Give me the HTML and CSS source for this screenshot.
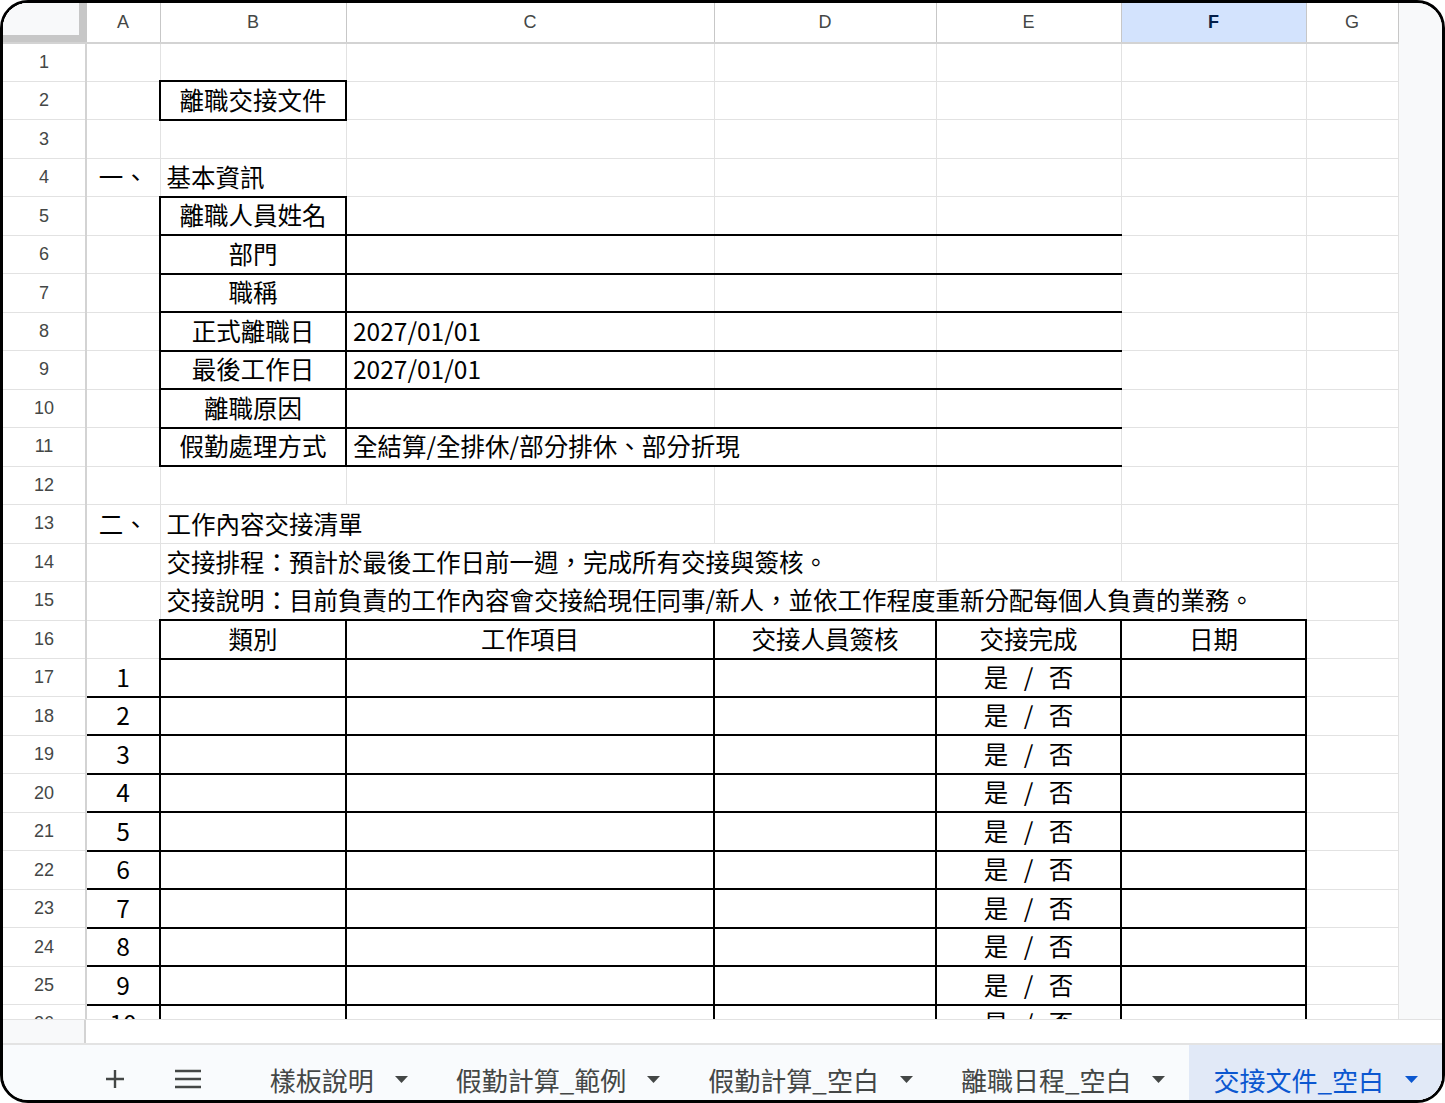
FILE: index.html
```html
<!DOCTYPE html>
<html lang="zh-Hant">
<head>
    <meta charset="UTF-8">
    <meta name="viewport" content="width=device-width, initial-scale=1.0">
    <title>離職交接文件</title>
    <link rel="stylesheet" href="styles.css">
</head>
<body>
    <div class="frame">
        <div class="sheet">
            <table class="grid">
                <colgroup>
                    <col class="c-rh">
                    <col class="c-a">
                    <col class="c-b">
                    <col class="c-c">
                    <col class="c-d">
                    <col class="c-e">
                    <col class="c-f">
                    <col class="c-g">
                </colgroup>
                <tr class="head">
                    <th class="corner"></th>
                    <th>A</th><th>B</th><th>C</th><th>D</th><th>E</th><th class="sel">F</th><th>G</th>
                </tr>
                <tr><th class="rh">1</th><td></td><td></td><td></td><td></td><td></td><td></td><td></td></tr>
                <tr><th class="rh">2</th><td></td><td class="box center">離職交接文件</td><td></td><td></td><td></td><td></td><td></td></tr>
                <tr><th class="rh">3</th><td></td><td></td><td></td><td></td><td></td><td></td><td></td></tr>
                <tr><th class="rh">4</th><td class="center">一、</td><td>基本資訊</td><td></td><td></td><td></td><td></td><td></td></tr>
                <tr><th class="rh">5</th><td></td><td class="box center">離職人員姓名</td><td class="bb"></td><td class="bb"></td><td class="bb"></td><td></td><td></td></tr>
                <tr><th class="rh">6</th><td></td><td class="box center">部門</td><td class="bb"></td><td class="bb"></td><td class="bb"></td><td></td><td></td></tr>
                <tr><th class="rh">7</th><td></td><td class="box center">職稱</td><td class="bb"></td><td class="bb"></td><td class="bb"></td><td></td><td></td></tr>
                <tr><th class="rh">8</th><td></td><td class="box center">正式離職日</td><td class="bb">2027/01/01</td><td class="bb"></td><td class="bb"></td><td></td><td></td></tr>
                <tr><th class="rh">9</th><td></td><td class="box center">最後工作日</td><td class="bb">2027/01/01</td><td class="bb"></td><td class="bb"></td><td></td><td></td></tr>
                <tr><th class="rh">10</th><td></td><td class="box center">離職原因</td><td class="bb"></td><td class="bb"></td><td class="bb"></td><td></td><td></td></tr>
                <tr><th class="rh">11</th><td></td><td class="box center">假勤處理方式</td><td class="bb" colspan="2">全結算/全排休/部分排休、部分折現</td><td class="bb"></td><td></td><td></td></tr>
                <tr><th class="rh">12</th><td></td><td></td><td></td><td></td><td></td><td></td><td></td></tr>
                <tr><th class="rh">13</th><td class="center">二、</td><td colspan="2">工作內容交接清單</td><td></td><td></td><td></td><td></td></tr>
                <tr><th class="rh">14</th><td></td><td colspan="3">交接排程：預計於最後工作日前一週，完成所有交接與簽核。</td><td></td><td></td><td></td></tr>
                <tr><th class="rh">15</th><td></td><td colspan="5">交接說明：目前負責的工作內容會交接給現任同事/新人，並依工作程度重新分配每個人負責的業務。</td><td></td></tr>
                <tr><th class="rh">16</th><td></td><td class="box center">類別</td><td class="box center">工作項目</td><td class="box center">交接人員簽核</td><td class="box center">交接完成</td><td class="box center">日期</td><td></td></tr>
                <tr><th class="rh">17</th><td class="bb center">1</td><td class="box"></td><td class="box"></td><td class="box"></td><td class="box center yn">是 / 否</td><td class="box"></td><td></td></tr>
                <tr><th class="rh">18</th><td class="bb center">2</td><td class="box"></td><td class="box"></td><td class="box"></td><td class="box center yn">是 / 否</td><td class="box"></td><td></td></tr>
                <tr><th class="rh">19</th><td class="bb center">3</td><td class="box"></td><td class="box"></td><td class="box"></td><td class="box center yn">是 / 否</td><td class="box"></td><td></td></tr>
                <tr><th class="rh">20</th><td class="bb center">4</td><td class="box"></td><td class="box"></td><td class="box"></td><td class="box center yn">是 / 否</td><td class="box"></td><td></td></tr>
                <tr><th class="rh">21</th><td class="bb center">5</td><td class="box"></td><td class="box"></td><td class="box"></td><td class="box center yn">是 / 否</td><td class="box"></td><td></td></tr>
                <tr><th class="rh">22</th><td class="bb center">6</td><td class="box"></td><td class="box"></td><td class="box"></td><td class="box center yn">是 / 否</td><td class="box"></td><td></td></tr>
                <tr><th class="rh">23</th><td class="bb center">7</td><td class="box"></td><td class="box"></td><td class="box"></td><td class="box center yn">是 / 否</td><td class="box"></td><td></td></tr>
                <tr><th class="rh">24</th><td class="bb center">8</td><td class="box"></td><td class="box"></td><td class="box"></td><td class="box center yn">是 / 否</td><td class="box"></td><td></td></tr>
                <tr><th class="rh">25</th><td class="bb center">9</td><td class="box"></td><td class="box"></td><td class="box"></td><td class="box center yn">是 / 否</td><td class="box"></td><td></td></tr>
                <tr><th class="rh">26</th><td class="bb center">10</td><td class="box"></td><td class="box"></td><td class="box"></td><td class="box center yn">是 / 否</td><td class="box"></td><td></td></tr>
            </table>
        </div>
        <div class="hscroll">
            <div class="hscroll-corner"></div>
        </div>
        <div class="tabbar">
            <span class="tab-btn add">
                <svg width="20" height="20" viewBox="0 0 20 20"><path d="M10 1v18M1 10h18" stroke="#444746" stroke-width="2.4" fill="none"/></svg>
            </span>
            <span class="tab-btn menu">
                <svg width="26" height="20" viewBox="0 0 26 20"><path d="M0 2h26M0 10h26M0 18h26" stroke="#444746" stroke-width="2.6" fill="none"/></svg>
            </span>
            <div class="tab first">樣板說明<svg class="caret" width="13" height="7" viewBox="0 0 13 7"><path d="M0 0h13L6.5 7z"/></svg></div>
            <div class="tab">假勤計算_範例<svg class="caret" width="13" height="7" viewBox="0 0 13 7"><path d="M0 0h13L6.5 7z"/></svg></div>
            <div class="tab">假勤計算_空白<svg class="caret" width="13" height="7" viewBox="0 0 13 7"><path d="M0 0h13L6.5 7z"/></svg></div>
            <div class="tab">離職日程_空白<svg class="caret" width="13" height="7" viewBox="0 0 13 7"><path d="M0 0h13L6.5 7z"/></svg></div>
            <div class="tab active">交接文件_空白<svg class="caret" width="13" height="7" viewBox="0 0 13 7"><path d="M0 0h13L6.5 7z"/></svg></div>
        </div>
    </div>
</body>
</html>
```

FILE: styles.css
```css
body {
    margin: 0;
    background: #fff;
    font-family: "Noto Sans CJK TC", "Noto Sans", sans-serif;
}
.frame {
    width: 1445px;
    height: 1103px;
    box-sizing: border-box;
    border: 3px solid #000;
    border-radius: 28px;
    overflow: hidden;
    display: flex;
    flex-direction: column;
    background: #fff;
}

/* sheet grid */
.sheet {
    height: 1016px;
    flex: none;
    overflow: hidden;
    background: #f8f9fa;
}
.grid {
    border-collapse: collapse;
    table-layout: fixed;
    width: 1395px;
    background: #fff;
}
.c-rh { width: 83px; }
.c-a { width: 74px; }
.c-b { width: 186px; }
.c-c { width: 368px; }
.c-d { width: 222px; }
.c-e { width: 185px; }
.c-f { width: 185px; }
.c-g { width: 92px; }

.grid tr {
    height: 38.48px;
}
.grid tr.head {
    height: 40px;
}
.grid td {
    border: 1px solid #e2e2e2;
    padding: 0 6px 5px;
    font-size: 24.5px;
    line-height: 28px;
    color: #000;
    vertical-align: bottom;
    white-space: nowrap;
    overflow: visible;
}
.head th {
    font-family: "Liberation Sans", Arial, sans-serif;
    font-weight: normal;
    font-size: 18px;
    color: #444746;
    background: #fff;
    border: 1px solid #c7c7c7;
    border-top: 0;
    border-bottom: 2px solid #d3d3d3;
    padding: 0;
}
.head th.sel {
    background: #d3e3fd;
    color: #041e49;
    font-weight: bold;
}
.head th.corner {
    background: #f8f9fa;
    border-left: 0;
    box-shadow: inset -7px -7px 0 #c7c7c7;
}
.rh {
    font-family: "Liberation Sans", Arial, sans-serif;
    font-weight: normal;
    font-size: 18px;
    color: #444746;
    background: #fff;
    border: 1px solid #e2e2e2;
    border-left: 0;
    border-right: 2px solid #d3d3d3;
    padding: 0;
    vertical-align: middle;
}

.grid td.center {
    text-align: center;
}
.grid td.box {
    border: 2px solid #000;
}
.grid td.bb {
    border-bottom: 2px solid #000;
}
.yn {
    word-spacing: 10px;
}

/* horizontal scroll strip */
.hscroll {
    height: 23px;
    flex: none;
    border-top: 1px solid #e2e2e2;
    background: #fff;
    display: flex;
}
.hscroll-corner {
    width: 81px;
    background: #f8f9fa;
    border-right: 2px solid #d3d3d3;
}

/* sheet tabs */
.tabbar {
    flex: 1;
    display: flex;
    align-items: stretch;
    background: #f9fbfd;
    border-top: 2px solid #e3e3e3;
    padding-left: 92px;
}
.tab-btn {
    width: 40px;
    display: flex;
    align-items: center;
    justify-content: center;
    padding-top: 13px;
}
.tab-btn.menu {
    margin-left: 33px;
}
.tab {
    display: flex;
    align-items: center;
    gap: 21px;
    padding: 13px 24px 0;
    font-size: 26px;
    color: #444746;
    white-space: nowrap;
}
.tab.first {
    margin-left: 38px;
}
.caret {
    fill: #444746;
}
.tab.active {
    flex: 1;
    background: #e1e9f7;
    color: #0b57d0;
}
.tab.active .caret {
    fill: #0b57d0;
}
```
